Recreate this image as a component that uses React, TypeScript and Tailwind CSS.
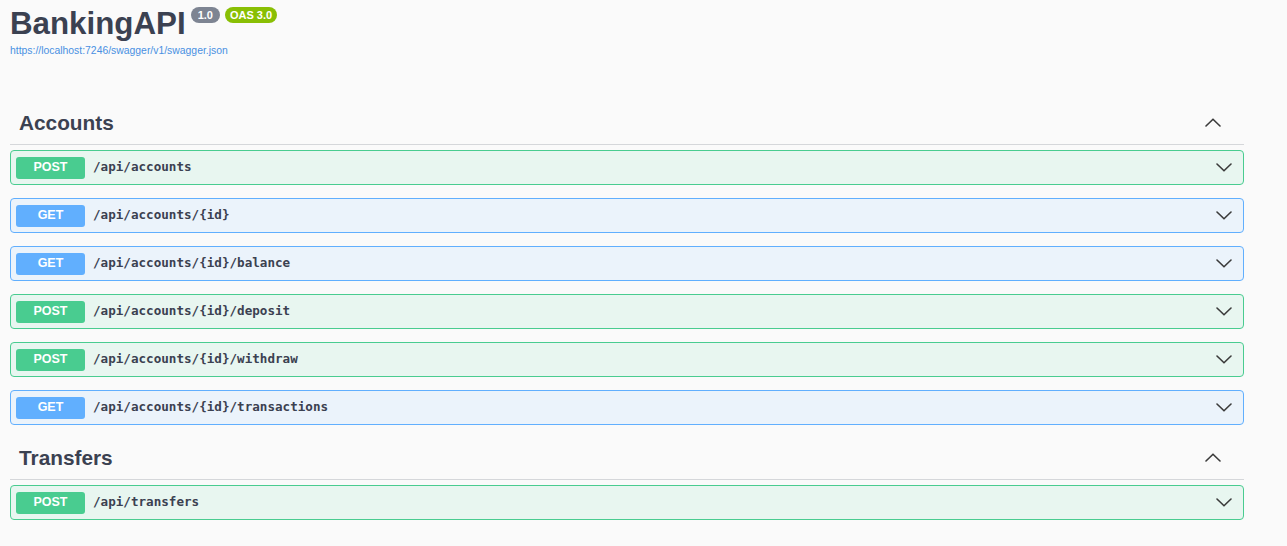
import React from 'react';

type Method = 'GET' | 'POST';

type Endpoint = {
  method: Method;
  path: string;
};

const sections: { name: string; endpoints: Endpoint[] }[] = [
  {
    name: 'Accounts',
    endpoints: [
      { method: 'POST', path: '/api/accounts' },
      { method: 'GET', path: '/api/accounts/{id}' },
      { method: 'GET', path: '/api/accounts/{id}/balance' },
      { method: 'POST', path: '/api/accounts/{id}/deposit' },
      { method: 'POST', path: '/api/accounts/{id}/withdraw' },
      { method: 'GET', path: '/api/accounts/{id}/transactions' },
    ],
  },
  {
    name: 'Transfers',
    endpoints: [{ method: 'POST', path: '/api/transfers' }],
  },
];

const Chevron = ({ up = false }: { up?: boolean }) => (
  <svg width="16" height="9" viewBox="0 0 16 9" fill="none" className="block">
    <path
      d={up ? 'M1 8 L8 1.2 L15 8' : 'M1 1 L8 7.8 L15 1'}
      stroke="#3b3b3b"
      strokeWidth="1.6"
      strokeLinecap="round"
      strokeLinejoin="round"
    />
  </svg>
);

const EndpointRow = ({ method, path }: Endpoint) => {
  const isGet = method === 'GET';
  return (
    <div
      className={
        isGet
          ? 'flex items-center h-[35px] rounded-[4px] border border-[#61affe] bg-[#ebf3fb] pl-[5px] pr-[11px]'
          : 'flex items-center h-[35px] rounded-[4px] border border-[#49cc90] bg-[#e8f6f0] pl-[5px] pr-[11px]'
      }
    >
      <span
        className={
          isGet
            ? 'flex items-center justify-center w-[69px] h-[22px] rounded-[3px] bg-[#61affe] text-white text-[12.5px] font-bold'
            : 'flex items-center justify-center w-[69px] h-[22px] rounded-[3px] bg-[#49cc90] text-white text-[12.5px] font-bold'
        }
        style={{ fontFamily: '"Liberation Sans", Arial, sans-serif' }}
      >
        {method}
      </span>
      <span
        className="ml-[8px] text-[12.6px] font-bold text-[#3b4151]"
        style={{ fontFamily: '"DejaVu Sans Mono", "Liberation Mono", monospace' }}
      >
        {path}
      </span>
      <div className="ml-auto">
        <Chevron />
      </div>
    </div>
  );
};

export default function App() {
  return (
    <div
      className="min-h-screen bg-[#fafafa] text-[#3b4151]"
      style={{ fontFamily: '"Liberation Sans", Arial, sans-serif' }}
    >
      <div className="ml-[10px] w-[1234px]">
        {/* API title + version badges */}
        <div className="flex items-start pt-[4px]">
          <h1 className="text-[31.3px] leading-[40px] font-bold text-[#3b4151]">BankingAPI</h1>
          <span className="ml-[5px] mt-[3px] h-[16px] px-[7px] rounded-full bg-[#7d8492] text-white text-[11px] font-bold leading-[16px]">
            1.0
          </span>
          <span className="ml-[5px] mt-[3px] h-[16px] px-[5px] rounded-full bg-[#89bf04] text-white text-[11px] font-bold leading-[16px]">
            OAS 3.0
          </span>
        </div>
        <a className="block mt-[1px] text-[10.4px] leading-[12px] text-[#4990e2]">
          https://localhost:7246/swagger/v1/swagger.json
        </a>

        <div className="mt-[44px]">
          {sections.map((section, i) => (
            <div key={section.name} className={i > 0 ? 'mt-[11px]' : ''}>
              <div className="flex items-center h-[44px] border-b border-[#d5d7da] pl-[9px] pr-[23px]">
                <h2 className="text-[20.8px] font-bold text-[#3b4151]">{section.name}</h2>
                <div className="ml-auto">
                  <Chevron up />
                </div>
              </div>
              <div className="mt-[5px] flex flex-col gap-[13px]">
                {section.endpoints.map((ep) => (
                  <EndpointRow key={ep.method + ep.path} {...ep} />
                ))}
              </div>
            </div>
          ))}
        </div>
      </div>
    </div>
  );
}
